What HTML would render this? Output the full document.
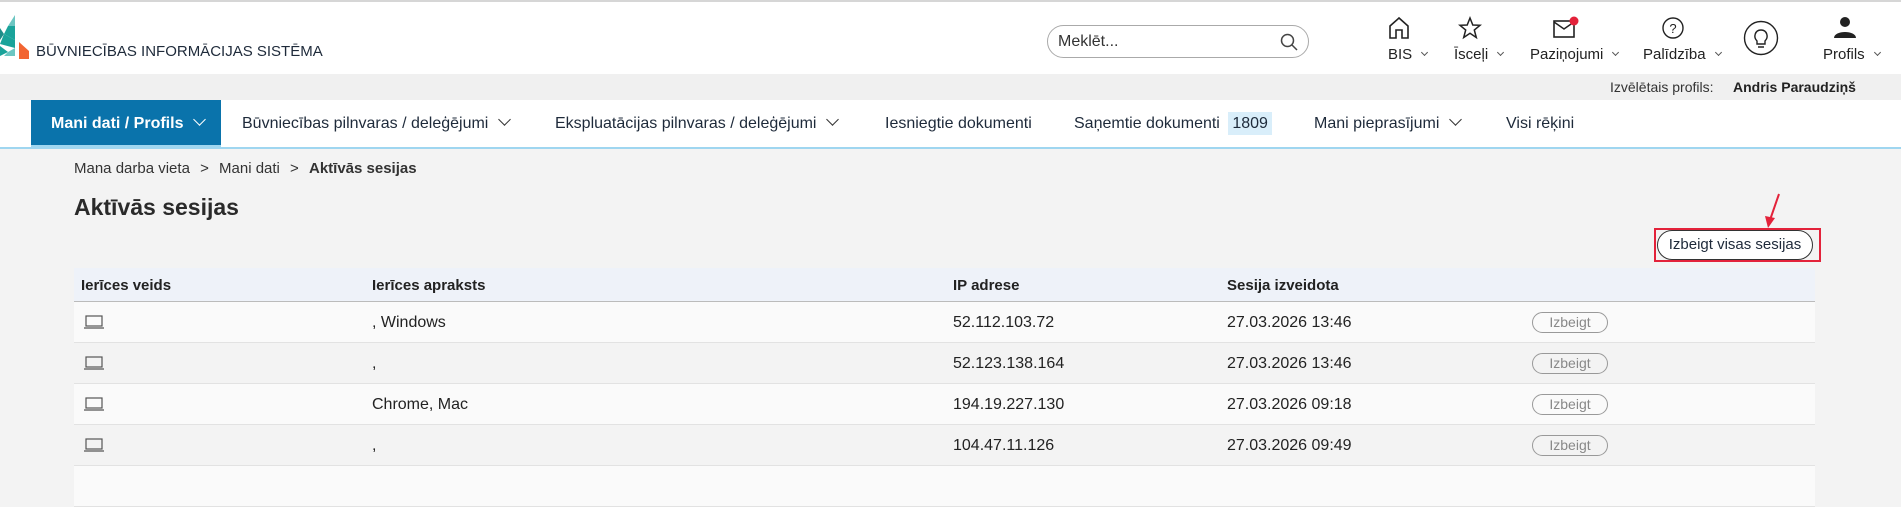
<!DOCTYPE html>
<html><head><meta charset="utf-8"><style>
*{box-sizing:border-box;margin:0;padding:0}
body{width:1901px;height:473px;overflow:hidden;background:#f3f3f3;font-family:"Liberation Sans",Arial,sans-serif;color:#222;position:relative}
.abs{position:absolute}
#top{left:0;top:0;width:1901px;height:74px;background:#fff;border-top:2px solid #d6d6d6}
#grey{left:0;top:74px;width:1901px;height:26px;background:#f0f0f0}
#nav{left:0;top:100px;width:1901px;height:49px;background:#fff;border-bottom:2px solid #9fd6f0}
.ni{position:absolute;top:0;height:47px;line-height:47px;font-size:16px;color:#1e2a3a;white-space:nowrap}
.chev{display:inline-block;width:9px;height:9px;border-right:1.5px solid #333;border-bottom:1.5px solid #333;transform:rotate(45deg);margin-left:12px;position:relative;top:-4px}
.lab{position:absolute;top:46px;font-size:15px;color:#222;white-space:nowrap}
.sch{display:inline-block;width:5px;height:5px;border-right:1px solid #555;border-bottom:1px solid #555;transform:rotate(45deg);margin-left:10px;position:relative;top:-4px}
.row{position:absolute;left:74px;width:1741px;height:41px;border-bottom:1px solid #e2e2e2;font-size:16px}
.row span{position:absolute;top:12px}
.bt{position:absolute;left:1458px;top:10px;width:76px;height:21px;border:1px solid #999;border-radius:11px;font-size:14px;color:#888;text-align:center;line-height:19px}
</style></head><body>
<div id="top" class="abs"></div>
<svg class="abs" style="left:0;top:14px" width="32" height="48" viewBox="0 0 32 48">
<polygon points="15,1 15,12 8,12" fill="#6cc6c2"/>
<polygon points="8,12 15,12 15,26 4,20" fill="#1aa39a"/>
<polygon points="0,14 4,20 0,26" fill="#1d8d88"/>
<polygon points="4,20 15,26 15,34 0,30" fill="#1aa39a"/>
<polygon points="0,32 8,38 0,42" fill="#1aa39a"/>
<polygon points="8,38 15,34 15,42 4,42" fill="#6cc6c2"/>
<polygon points="19,28 29,37 29,45 19,45" fill="#f26532"/>
</svg>
<div class="abs" style="left:36px;top:43px;font-size:15px;color:#1e2a3a">BŪVNIECĪBAS INFORMĀCIJAS SISTĒMA</div>
<div class="abs" style="left:1047px;top:25px;width:262px;height:33px;border:1px solid #aaa;border-radius:17px;background:#fff"><span class="abs" style="left:10px;top:7px;font-size:16px;color:#333">Meklēt...</span>
<svg class="abs" style="left:232px;top:7px" width="18" height="18" viewBox="0 0 18 18"><circle cx="7.5" cy="7.5" r="6" fill="none" stroke="#444" stroke-width="1.5"/><line x1="12" y1="12" x2="17" y2="17" stroke="#444" stroke-width="1.5"/></svg></div>
<svg class="abs" style="left:1388px;top:16px" width="22" height="24" viewBox="0 0 22 24"><path d="M2 10 L11 2 L20 10 V22 H14 V14 H8 V22 H2 Z" fill="none" stroke="#222" stroke-width="1.6"/></svg>
<div class="lab" style="left:1388px">BIS<span class="sch"></span></div>
<svg class="abs" style="left:1458px;top:16px" width="24" height="24" viewBox="0 0 24 24"><polygon points="12,2 14.8,9 22,9.3 16.3,14 18.3,21.5 12,17.3 5.7,21.5 7.7,14 2,9.3 9.2,9" fill="none" stroke="#222" stroke-width="1.5"/></svg>
<div class="lab" style="left:1454px">Īsceļi<span class="sch"></span></div>
<svg class="abs" style="left:1552px;top:16px" width="28" height="24" viewBox="0 0 28 24"><rect x="2" y="5" width="20" height="16" fill="none" stroke="#222" stroke-width="1.6"/><path d="M2 6 L12 13 L22 6" fill="none" stroke="#222" stroke-width="1.5"/><circle cx="22" cy="5" r="4.5" fill="#e3223a"/></svg>
<div class="lab" style="left:1530px">Paziņojumi<span class="sch"></span></div>
<svg class="abs" style="left:1661px;top:16px" width="24" height="24" viewBox="0 0 24 24"><circle cx="12" cy="12" r="10" fill="none" stroke="#222" stroke-width="1.4"/><text x="12" y="17" font-size="13" text-anchor="middle" font-family="Liberation Sans" fill="#222">?</text></svg>
<div class="lab" style="left:1643px">Palīdzība<span class="sch"></span></div>
<svg class="abs" style="left:1743px;top:20px" width="36" height="36" viewBox="0 0 36 36"><circle cx="18" cy="18" r="16.5" fill="none" stroke="#222" stroke-width="1.4"/><path d="M14 21 C10 17 12 10 18 10 C24 10 26 17 22 21 V24 H14 Z M15 27 H21" fill="none" stroke="#222" stroke-width="1.4"/></svg>
<svg class="abs" style="left:1832px;top:16px" width="26" height="24" viewBox="0 0 26 24"><circle cx="13" cy="6" r="5" fill="#222"/><path d="M2 22 C2 14 24 14 24 22 Z" fill="#222"/></svg>
<div class="lab" style="left:1823px">Profils<span class="sch"></span></div>
<div id="grey" class="abs"></div>
<div class="abs" style="left:1610px;top:79px;font-size:14px;color:#333">Izvēlētais profils:</div>
<div class="abs" style="left:1733px;top:79px;font-size:14px;font-weight:bold;color:#222">Andris Paraudziņš</div>
<div id="nav" class="abs">
<div class="ni" style="left:31px;width:190px;background:#0a73ab;color:#fff;font-weight:bold;padding-left:20px;border-bottom:2px solid #9fd6f0">Mani dati / Profils<span class="chev" style="border-color:#fff"></span></div>
<div class="ni" style="left:242px">Būvniecības pilnvaras / deleģējumi<span class="chev"></span></div>
<div class="ni" style="left:555px">Ekspluatācijas pilnvaras / deleģējumi<span class="chev"></span></div>
<div class="ni" style="left:885px">Iesniegtie dokumenti</div>
<div class="ni" style="left:1074px">Saņemtie dokumenti <span style="background:#d9eefa;padding:3px 4px;margin-left:4px">1809</span></div>
<div class="ni" style="left:1314px">Mani pieprasījumi<span class="chev"></span></div>
<div class="ni" style="left:1506px">Visi rēķini</div>
</div>
<div class="abs" style="left:74px;top:160px;font-size:15px;color:#333">Mana darba vieta <span style="margin:0 6px">&gt;</span> Mani dati <span style="margin:0 6px">&gt;</span> <b>Aktīvās sesijas</b></div>
<div class="abs" style="left:74px;top:194px;font-size:23px;font-weight:bold;color:#2a2a2a">Aktīvās sesijas</div>
<div class="abs" style="left:1657px;top:230px;width:156px;height:30px;border:1px solid #333;border-radius:15px;background:#fff;font-size:15px;text-align:center;line-height:28px;color:#1e2a3a">Izbeigt visas sesijas</div>
<div class="abs" style="left:1654px;top:228px;width:167px;height:34px;border:2px solid #e3223a"></div>
<svg class="abs" style="left:1755px;top:190px" width="40" height="42" viewBox="0 0 40 42"><line x1="24" y1="4" x2="15" y2="30" stroke="#e3223a" stroke-width="2"/><polygon points="10,26 20,28 13,38" fill="#e3223a"/></svg>
<div class="abs" style="left:74px;top:268px;width:1741px;height:34px;background:#eef2f9;border-bottom:1px solid #bbb;font-size:15px;font-weight:bold">
<span class="abs" style="left:7px;top:9px">Ierīces veids</span><span class="abs" style="left:298px;top:9px">Ierīces apraksts</span><span class="abs" style="left:879px;top:9px">IP adrese</span><span class="abs" style="left:1153px;top:9px">Sesija izveidota</span></div>
<div class="row" style="top:302px;background:#fafafa"><svg class="abs" style="left:10px;top:13px" width="20" height="14" viewBox="0 0 20 14"><rect x="2" y="1" width="16" height="10" fill="none" stroke="#555" stroke-width="1.2"/><line x1="0" y1="13" x2="20" y2="13" stroke="#555" stroke-width="1.2"/></svg><span style="left:298px">, Windows</span><span style="left:879px">52.112.103.72</span><span style="left:1153px">27.03.2026 13:46</span><div class="bt">Izbeigt</div></div>
<div class="row" style="top:343px;background:#f3f3f3"><svg class="abs" style="left:10px;top:13px" width="20" height="14" viewBox="0 0 20 14"><rect x="2" y="1" width="16" height="10" fill="none" stroke="#555" stroke-width="1.2"/><line x1="0" y1="13" x2="20" y2="13" stroke="#555" stroke-width="1.2"/></svg><span style="left:298px">,</span><span style="left:879px">52.123.138.164</span><span style="left:1153px">27.03.2026 13:46</span><div class="bt">Izbeigt</div></div>
<div class="row" style="top:384px;background:#fafafa"><svg class="abs" style="left:10px;top:13px" width="20" height="14" viewBox="0 0 20 14"><rect x="2" y="1" width="16" height="10" fill="none" stroke="#555" stroke-width="1.2"/><line x1="0" y1="13" x2="20" y2="13" stroke="#555" stroke-width="1.2"/></svg><span style="left:298px">Chrome, Mac</span><span style="left:879px">194.19.227.130</span><span style="left:1153px">27.03.2026 09:18</span><div class="bt">Izbeigt</div></div>
<div class="row" style="top:425px;background:#f3f3f3"><svg class="abs" style="left:10px;top:13px" width="20" height="14" viewBox="0 0 20 14"><rect x="2" y="1" width="16" height="10" fill="none" stroke="#555" stroke-width="1.2"/><line x1="0" y1="13" x2="20" y2="13" stroke="#555" stroke-width="1.2"/></svg><span style="left:298px">,</span><span style="left:879px">104.47.11.126</span><span style="left:1153px">27.03.2026 09:49</span><div class="bt">Izbeigt</div></div>
<div class="row" style="top:466px;background:#fafafa"></div>
</body></html>
